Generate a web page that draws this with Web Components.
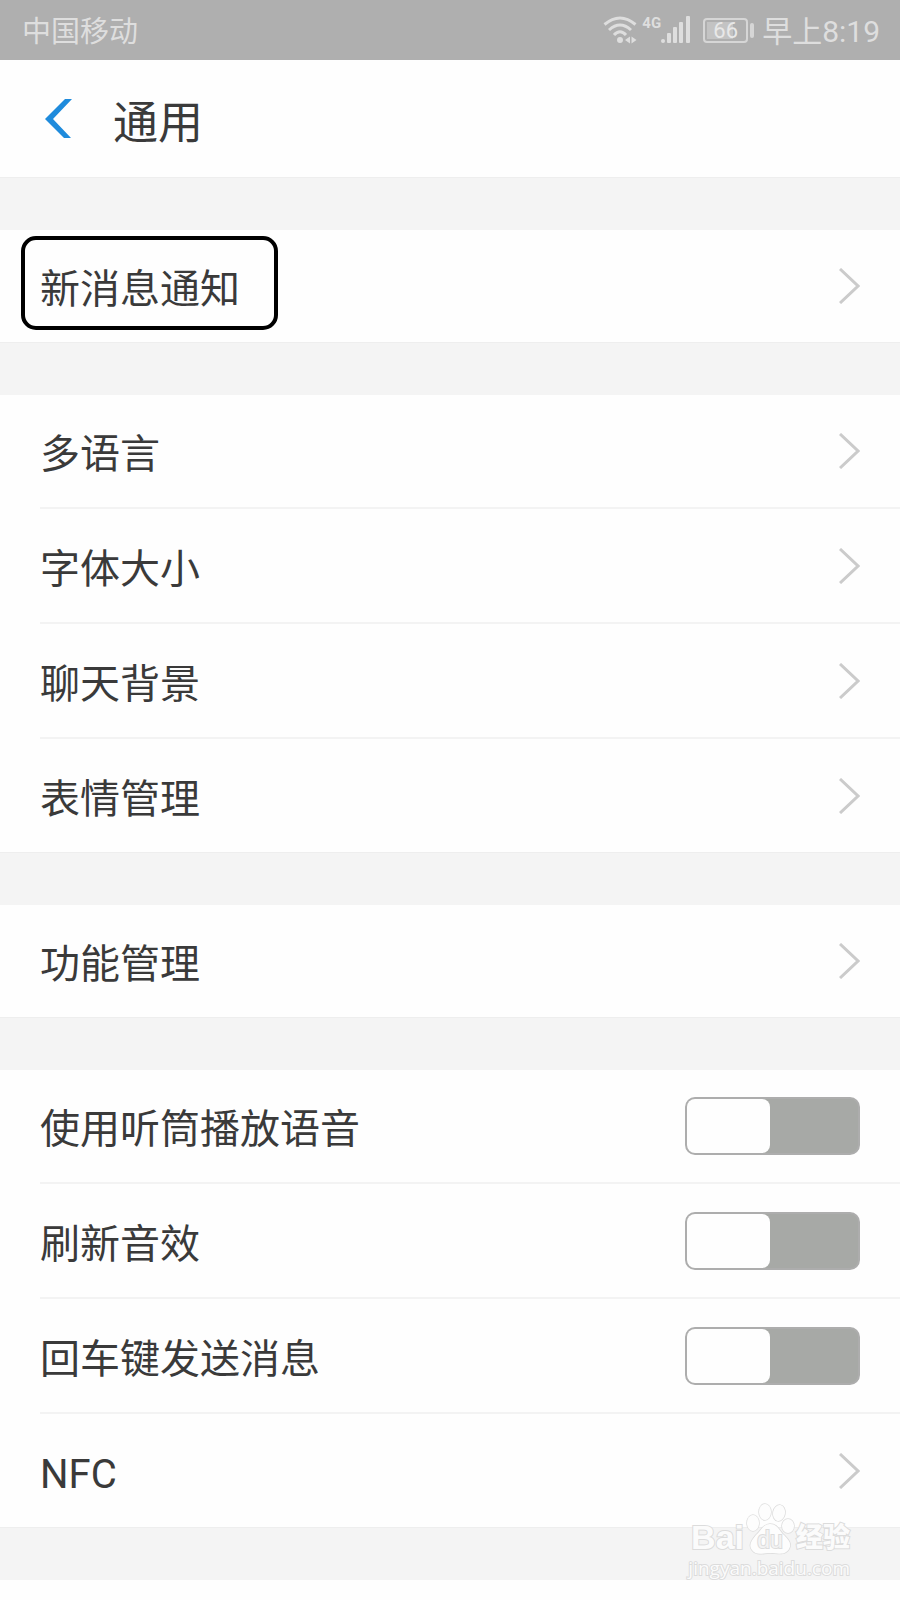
<!DOCTYPE html>
<html lang="zh-CN">
<head>
<meta charset="utf-8">
<meta name="viewport" content="width=device-width, initial-scale=1">
<title>通用</title>
<style>
  body {
    margin: 0;
    min-height: 100vh;
    background: #fefefe;
    color: #3a3a3a;
    font-family: Roboto, "Noto Sans CJK SC", sans-serif;
  }
</style>
</head>
<body>
<settings-page></settings-page>

<script>
class StatusBar extends HTMLElement {
  constructor () {
    super()
    this.shadow = this.attachShadow({ mode: 'open' })
  }

  connectedCallback () {
    this.render()
  }

  render () {
    this.shadow.innerHTML =
    /* html */`
    <style>
      :host{
        align-items: center;
        background: #afafaf;
        box-sizing: border-box;
        color: #dedede;
        display: flex;
        font-size: 29px;
        height: 60px;
        justify-content: space-between;
        line-height: 60px;
        padding: 0 20px 0 22px;
      }

      .carrier, .time{
        padding-top: 4px;
      }

      .time{
        font-size: 30px;
      }

      .icons{
        align-items: center;
        display: flex;
        height: 60px;
      }

      svg{
        display: block;
      }

      .network{
        align-self: flex-start;
        font-size: 15px;
        font-weight: 700;
        line-height: 16px;
        margin: 15px 0 0 5px;
      }

      .signal{
        margin-right: 13px;
      }

      .battery{
        border: 2px solid #d6d6d6;
        border-radius: 4px;
        box-sizing: border-box;
        color: #e8e8e8;
        height: 25px;
        line-height: 22px;
        font-size: 22px;
        text-align: center;
        width: 45px;
        background: linear-gradient(#c3c3c3, #c3c3c3) 2px 2px / 26px 17px no-repeat;
      }

      .cap{
        background: #d6d6d6;
        border-radius: 2px;
        height: 15px;
        margin: 0 8px 0 2px;
        width: 4px;
      }
    </style>

    <span class="carrier">中国移动</span>
    <div class="icons">
      <svg width="34" height="28" viewBox="0 0 34 28" fill="none" stroke="currentColor" stroke-width="3" aria-hidden="true">
        <path d="M1.500 8.500Q17-4.500 32.500 8.500M6 14Q17 4 28 14M11 19Q17 12.500 23 19"/>
        <circle cx="17" cy="24" r="3" fill="currentColor" stroke="none"/>
        <path d="M27 20.500v7l-5-3.500zM28.500 20.500v7l5-3.500z" fill="currentColor" stroke="none"/>
      </svg>
      <span class="network">4G</span>
      <svg class="signal" width="29" height="28" viewBox="0 0 29 28" fill="currentColor" aria-hidden="true">
        <rect x="0" y="23" width="4" height="4" rx="2"/>
        <rect x="6" y="17" width="4" height="10" rx="1"/>
        <rect x="12" y="11" width="4" height="16" rx="1"/>
        <rect x="18" y="6" width="4" height="21" rx="1"/>
        <rect x="25" y="0" width="4" height="27" rx="1"/>
      </svg>
      <span class="battery">66</span>
      <span class="cap"></span>
      <span class="time">早上8:19</span>
    </div>
    `
  }
}

customElements.define('status-bar', StatusBar)

class TitleBar extends HTMLElement {
  constructor () {
    super()
    this.shadow = this.attachShadow({ mode: 'open' })
  }

  connectedCallback () {
    this.render()
  }

  render () {
    this.shadow.innerHTML =
    /* html */`
    <style>
      :host{
        align-items: center;
        display: flex;
        gap: 40px;
        height: 117px;
        padding: 0 44px;
      }

      button{
        background-color: transparent;
        border: none;
        color: #1f8bdc;
        cursor: pointer;
        padding: 0;
      }

      svg{
        display: block;
      }

      h1{
        font-size: 45px;
        font-weight: 400;
        line-height: 60px;
        margin: 0;
        padding-top: 10px;
      }
    </style>

    <button type="button" aria-label="返回">
      <svg width="29" height="40" viewBox="0 0 29 40" fill="currentColor">
        <path d="M21 0h7L9 20l18 19h-7L1 20z"/>
      </svg>
    </button>
    <h1><slot></slot></h1>
    `
  }
}

customElements.define('title-bar', TitleBar)

class SettingsGroup extends HTMLElement {
  constructor () {
    super()
    this.shadow = this.attachShadow({ mode: 'open' })
  }

  connectedCallback () {
    this.render()
  }

  render () {
    this.shadow.innerHTML =
    /* html */`
    <style>
      :host{
        background: #fefefe;
        display: block;
      }

      ::slotted(:not(:last-child))::after{
        background: #f3f3f3;
        content: '';
        display: block;
        height: 2px;
        margin: 0 0 1px 40px;
      }
    </style>

    <slot></slot>
    `
  }
}

customElements.define('settings-group', SettingsGroup)

class LinkRow extends HTMLElement {
  constructor () {
    super()
    this.shadow = this.attachShadow({ mode: 'open' })
  }

  connectedCallback () {
    this.render()
  }

  render () {
    this.shadow.innerHTML =
    /* html */`
    <style>
      :host{
        display: block;
      }

      a{
        align-items: center;
        color: inherit;
        display: flex;
        font-size: 40px;
        height: 112px;
        justify-content: space-between;
        line-height: 60px;
        padding: 0 40px;
        position: relative;
        text-decoration: none;
      }

      span{
        padding-top: 8px;
      }

      svg{
        display: block;
      }

      /* marker frame drawn round the label */
      :host([marked]) a::before{
        border: 4px solid #000;
        border-radius: 15px;
        box-sizing: border-box;
        content: '';
        height: 94px;
        left: 21px;
        position: absolute;
        top: 6px;
        width: 257px;
      }
    </style>

    <a href="#">
      <span><slot></slot></span>
      <svg width="21" height="36" viewBox="0 0 21 36" fill="none" stroke="#cbcbcb" stroke-width="3" aria-hidden="true">
        <path d="M1 1l18 17L1 35"/>
      </svg>
    </a>
    `
  }
}

customElements.define('link-row', LinkRow)

class SwitchRow extends HTMLElement {
  constructor () {
    super()
    this.shadow = this.attachShadow({ mode: 'open' })
  }

  connectedCallback () {
    this.render()
  }

  render () {
    this.shadow.innerHTML =
    /* html */`
    <style>
      :host{
        display: block;
      }

      .row{
        align-items: center;
        display: flex;
        font-size: 40px;
        height: 112px;
        justify-content: space-between;
        line-height: 60px;
        padding: 0 40px;
      }

      label{
        padding-top: 8px;
      }

      input{
        appearance: none;
        background: #a7a9a6;
        border: 2px solid #adadad;
        border-radius: 10px;
        box-sizing: border-box;
        cursor: pointer;
        display: flex;
        height: 58px;
        margin: 0;
        width: 175px;
      }

      input::before{
        background: #fefefe;
        border-radius: 8px;
        content: '';
        width: 83px;
      }

      input:checked{
        background: #1f8bdc;
        justify-content: flex-end;
      }
    </style>

    <div class="row">
      <label for="toggle"><slot></slot></label>
      <input type="checkbox" role="switch" id="toggle">
    </div>
    `
  }
}

customElements.define('switch-row', SwitchRow)

class SiteMark extends HTMLElement {
  constructor () {
    super()
    this.shadow = this.attachShadow({ mode: 'open' })
  }

  connectedCallback () {
    this.render()
  }

  render () {
    this.shadow.innerHTML =
    /* html */`
    <style>
      :host{
        bottom: 0;
        color: #fbfbfb;
        font-family: "Open Sans", "Noto Sans CJK SC", sans-serif;
        pointer-events: none;
        position: absolute;
        right: 50px;
        -webkit-text-stroke: 2px #dcdcdc;
        paint-order: stroke fill;
      }

      .brand{
        align-items: flex-end;
        display: flex;
        font-size: 34px;
        font-weight: 700;
        justify-content: flex-end;
        line-height: 38px;
      }

      .bai{
        font-family: "Liberation Sans", sans-serif;
      }

      .paw{
        display: grid;
        margin: 0 1px;
      }

      .paw > *{
        grid-area: 1 / 1;
      }

      .du{
        align-self: end;
        color: #f3f3f3;
        font-family: "Liberation Sans", sans-serif;
        font-size: 23px;
        font-weight: 400;
        line-height: 32px;
        text-align: center;
      }

      .name{
        font-size: 27px;
        font-weight: 900;
      }

      .url{
        font-size: 19px;
        line-height: 24px;
        text-align: right;
      }
    </style>

    <div class="brand">
      <span class="bai">Bai</span>
      <span class="paw">
        <svg width="50" height="54" viewBox="0 0 50 54" fill="#fdfdfd" stroke="#dcdcdc" stroke-width="1.500" aria-hidden="true">
          <ellipse cx="8" cy="21" rx="6" ry="8"/>
          <ellipse cx="20" cy="10" rx="6" ry="8"/>
          <ellipse cx="34" cy="11" rx="6" ry="8" transform="rotate(10 34 11)"/>
          <ellipse cx="43" cy="24" rx="6" ry="7"/>
          <path d="M25 22c8 0 9 7 14 11 5 5 8 9 5 14-4 7-12 4-19 4s-14 3-18-3c-4-5 0-10 4-15 5-4 7-11 14-11z"/>
        </svg>
        <span class="du">du</span>
      </span>
      <span class="name">经验</span>
    </div>
    <div class="url">jingyan.baidu.com</div>
    `
  }
}

customElements.define('site-mark', SiteMark)

class SettingsPage extends HTMLElement {
  constructor () {
    super()
    this.shadow = this.attachShadow({ mode: 'open' })
  }

  connectedCallback () {
    this.render()
  }

  render () {
    this.shadow.innerHTML =
    /* html */`
    <style>
      :host{
        display: block;
      }

      main{
        background: #f4f4f4;
        display: flex;
        flex-direction: column;
        gap: 53px;
        padding-bottom: 53px;
        position: relative;
      }

      title-bar{
        background: #fefefe;
      }

      title-bar, settings-group{
        box-shadow: 0 1px #eeeeee;
      }
    </style>

    <status-bar></status-bar>
    <main>
      <title-bar>通用</title-bar>
      <settings-group>
        <link-row marked>新消息通知</link-row>
      </settings-group>
      <settings-group>
        <link-row>多语言</link-row>
        <link-row>字体大小</link-row>
        <link-row>聊天背景</link-row>
        <link-row>表情管理</link-row>
      </settings-group>
      <settings-group>
        <link-row>功能管理</link-row>
      </settings-group>
      <settings-group>
        <switch-row>使用听筒播放语音</switch-row>
        <switch-row>刷新音效</switch-row>
        <switch-row>回车键发送消息</switch-row>
        <link-row>NFC</link-row>
      </settings-group>
      <site-mark></site-mark>
    </main>
    `
  }
}

customElements.define('settings-page', SettingsPage)
</script>
</body>
</html>
